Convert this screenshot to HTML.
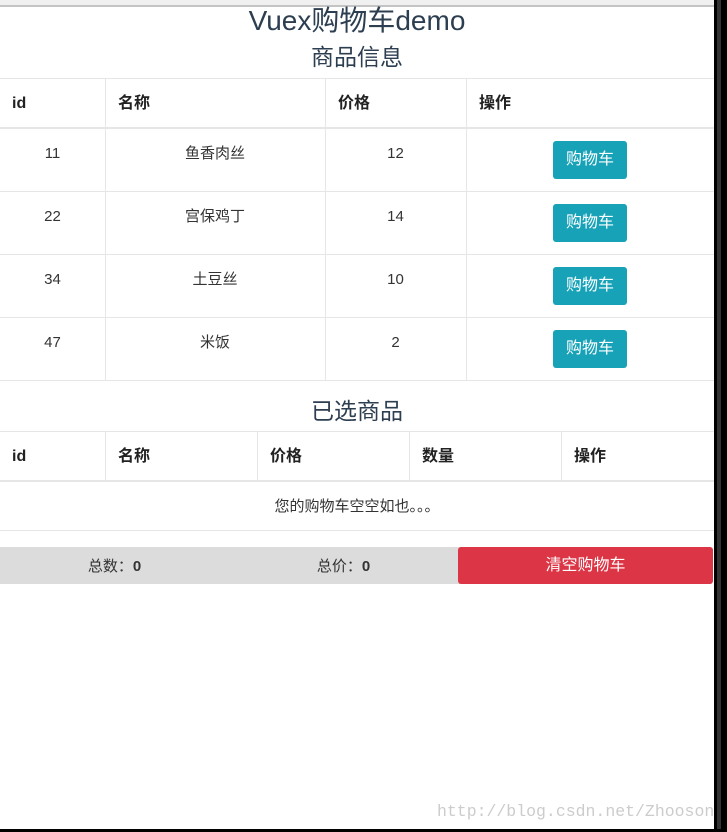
<!DOCTYPE html>
<html><head><meta charset="utf-8"><style>
*{margin:0;padding:0;box-sizing:border-box}
body{width:727px;height:832px;background:#fff;position:relative;overflow:hidden;font-family:"Liberation Sans","Noto Sans CJK SC",sans-serif;color:#333}
.a{position:absolute}
.t{position:absolute;text-align:center;white-space:nowrap}
.hl{position:absolute;background:#e6e6e6;height:1px}
.vl{position:absolute;background:#e6e6e6;width:1px}
.th{position:absolute;font-weight:bold;font-size:16px;line-height:20px;height:20px;color:#222}
.td{position:absolute;font-size:15px;line-height:20px;height:20px;text-align:center;color:#333}
.btn{position:absolute;left:553px;width:74px;height:38px;background:#17a2b8;color:#fff;border-radius:3px;font-size:16px;text-align:center;line-height:38px}
</style></head><body>
<div class="a" style="left:0;top:0;width:714px;height:5px;background:#f0f0f0"></div>
<div class="a" style="left:0;top:5px;width:714px;height:2px;background:#c4c4c4"></div>

<div class="t" style="left:0;width:714px;top:4px;font-size:28px;line-height:34px;color:#2c3e50">Vuex购物车demo</div>
<div class="t" style="left:0;width:714px;top:42px;font-size:23px;line-height:30px;color:#2c3e50">商品信息</div>

<div class="hl" style="left:0;width:714px;top:78px"></div>
<div class="hl" style="left:0;width:714px;top:127px;height:2px"></div>
<div class="hl" style="left:0;width:714px;top:191px"></div>
<div class="hl" style="left:0;width:714px;top:254px"></div>
<div class="hl" style="left:0;width:714px;top:317px"></div>
<div class="hl" style="left:0;width:714px;top:380px"></div>
<div class="vl" style="left:105px;top:78px;height:302px"></div>
<div class="vl" style="left:325px;top:78px;height:302px"></div>
<div class="vl" style="left:466px;top:78px;height:302px"></div>
<div class="th" style="left:12px;top:94px">id</div>
<div class="th" style="left:118px;top:94px">名称</div>
<div class="th" style="left:338px;top:94px">价格</div>
<div class="th" style="left:479px;top:94px">操作</div>

<div class="td" style="left:0;width:105px;top:144px">11</div><div class="td" style="left:105px;width:220px;top:144px">鱼香肉丝</div><div class="td" style="left:325px;width:141px;top:144px">12</div><div class="btn" style="top:141px">购物车</div>
<div class="td" style="left:0;width:105px;top:207px">22</div><div class="td" style="left:105px;width:220px;top:207px">宫保鸡丁</div><div class="td" style="left:325px;width:141px;top:207px">14</div><div class="btn" style="top:204px">购物车</div>
<div class="td" style="left:0;width:105px;top:270px">34</div><div class="td" style="left:105px;width:220px;top:270px">土豆丝</div><div class="td" style="left:325px;width:141px;top:270px">10</div><div class="btn" style="top:267px">购物车</div>
<div class="td" style="left:0;width:105px;top:333px">47</div><div class="td" style="left:105px;width:220px;top:333px">米饭</div><div class="td" style="left:325px;width:141px;top:333px">2</div><div class="btn" style="top:330px">购物车</div>

<div class="t" style="left:0;width:714px;top:396px;font-size:23px;line-height:30px;color:#2c3e50">已选商品</div>
<div class="hl" style="left:0;width:714px;top:431px"></div>
<div class="hl" style="left:0;width:714px;top:480px;height:2px"></div>
<div class="hl" style="left:0;width:714px;top:530px"></div>
<div class="vl" style="left:105px;top:431px;height:50px"></div>
<div class="vl" style="left:257px;top:431px;height:50px"></div>
<div class="vl" style="left:409px;top:431px;height:50px"></div>
<div class="vl" style="left:561px;top:431px;height:50px"></div>
<div class="th" style="left:12px;top:447px">id</div>
<div class="th" style="left:118px;top:447px">名称</div>
<div class="th" style="left:270px;top:447px">价格</div>
<div class="th" style="left:422px;top:447px">数量</div>
<div class="th" style="left:574px;top:447px">操作</div>
<div class="td" style="left:0;width:714px;top:497px">您的购物车空空如也。。。</div>

<div class="a" style="left:0;top:547px;width:460px;height:37px;background:#dcdcdc"></div>
<div class="td" style="left:0;width:229px;top:557px">总数：<b>0</b></div>
<div class="td" style="left:229px;width:229px;top:557px">总价：<b>0</b></div>
<div class="a" style="left:458px;top:547px;width:255px;height:37px;background:#dc3545;border-radius:3px;color:#fff;font-size:16px;text-align:center;line-height:37px">清空购物车</div>

<div class="a" style="left:437px;top:802px;width:277px;overflow:hidden;font-family:'Liberation Mono',monospace;font-size:16.5px;line-height:20px;color:#ccc;white-space:nowrap">http://blog.csdn.net/Zhooson</div>
<div class="a" style="left:714px;top:0;width:13px;height:832px;background:#000"></div>
<div class="a" style="left:717px;top:0;width:4px;height:832px;background:#333"></div>
<div class="a" style="left:0;top:829px;width:727px;height:3px;background:#000"></div>
</body></html>
